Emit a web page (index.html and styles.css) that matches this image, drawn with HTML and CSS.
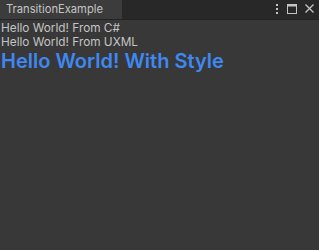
FILE: index.html
```html
<!DOCTYPE html>
<html lang="en">
<head>
  <meta charset="UTF-8" />
  <title>TransitionExample</title>
  <link rel="stylesheet" href="styles.css">
</head>
<body>

  <header class="tabbar">
    <div class="tab">TransitionExample</div>
    <div class="tools">
      <svg class="icon" width="4" height="10" viewBox="0 0 4 10">
        <rect x="1" y="0" width="2" height="2" fill="#c4c4c4"/>
        <rect x="1" y="4" width="2" height="2" fill="#c4c4c4"/>
        <rect x="1" y="8" width="2" height="2" fill="#c4c4c4"/>
      </svg>
      <svg class="icon" width="10" height="10" viewBox="0 0 10 10">
        <rect x="0.5" y="0.5" width="9" height="9" fill="none" stroke="#c4c4c4"/>
        <rect x="0.5" y="0.5" width="9" height="2" fill="#c4c4c4"/>
      </svg>
      <svg class="icon" width="9" height="9" viewBox="0 0 9 9">
        <path d="M0.5 0.5 L8.5 8.5 M8.5 0.5 L0.5 8.5" stroke="#c4c4c4" stroke-width="1.3"/>
      </svg>
    </div>
  </header>

  <main class="content">
    <p class="label">Hello World! From C#</p>
    <p class="label">Hello World! From UXML</p>
    <p class="styled">Hello World! With Style</p>
  </main>

</body>
</html>
```

FILE: styles.css
```css
* { box-sizing: border-box; }

body {
  margin: 0;
  width: 319px;
  height: 250px;
  background: #383838;
  font-family: Inter, 'Noto Sans', sans-serif;
  color: #c4c4c4;
  overflow: hidden;
}

.tabbar {
  display: flex;
  justify-content: space-between;
  align-items: flex-end;
  height: 20px;
  background: #282828;
  border-bottom: 1px solid #232323;
}

.tab {
  width: 122px;
  height: 19px;
  padding: 1px 0 0 6px;
  background: #3c3c3c;
  font-size: 11.2px;
  line-height: 17px;
  color: #c4c4c4;
}

.tools {
  display: flex;
  align-items: center;
  gap: 8px;
  height: 19px;
  padding: 0 5px 2px 0;
}

.icon { display: block; }

.content {
  padding: 1px 0 0 1px;
}

.label {
  margin: 0;
  font-size: 11.8px;
  line-height: 14px;
  color: #c4c4c4;
}

.styled {
  margin: 0;
  font-size: 20px;
  line-height: 24px;
  font-weight: 600;
  color: #3f88f2;
}
```
